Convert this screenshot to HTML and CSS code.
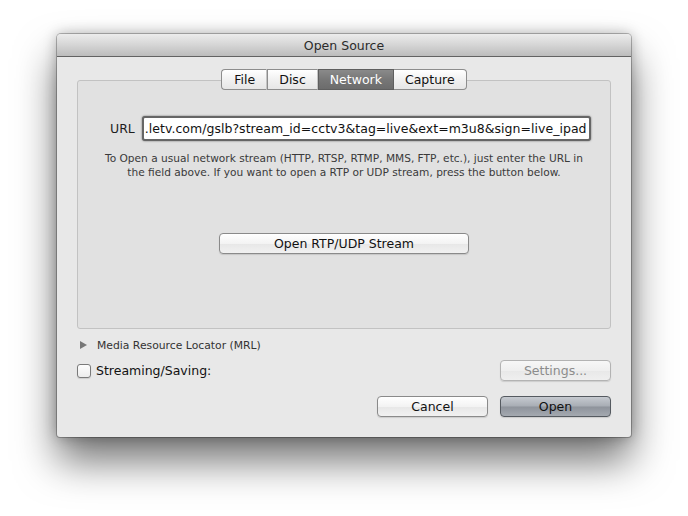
FILE: index.html
```html
<!DOCTYPE html>
<html>
<head>
<meta charset="utf-8">
<link rel="stylesheet" href="styles.css">
</head>
<body>
<div class="window">
  <div class="titlebar">Open Source</div>
  <div class="content">
    <div class="tabs">
      <div class="tab">File</div>
      <div class="tab">Disc</div>
      <div class="tab selected">Network</div>
      <div class="tab last">Capture</div>
    </div>
    <div class="group">
      <div class="url-row">
        <span class="url-label">URL</span>
        <div class="field">.letv.com/gslb?stream_id=cctv3&amp;tag=live&amp;ext=m3u8&amp;sign=live_ipad</div>
      </div>
      <p class="help">To Open a usual network stream (HTTP, RTSP, RTMP, MMS, FTP, etc.), just enter the URL in<br>the field above. If you want to open a RTP or UDP stream, press the button below.</p>
      <div class="center">
        <div class="btn rtp">Open RTP/UDP Stream</div>
      </div>
    </div>
    <div class="mrl-row">
      <span class="disclosure"></span>
      <span>Media Resource Locator (MRL)</span>
    </div>
    <div class="stream-row">
      <label class="check"><span class="box"></span>Streaming/Saving:</label>
      <div class="btn disabled small">Settings...</div>
    </div>
    <div class="actions">
      <div class="btn small">Cancel</div>
      <div class="btn small default">Open</div>
    </div>
  </div>
</div>
</body>
</html>
```

FILE: styles.css
```css
* { box-sizing: border-box; }
html, body { margin: 0; padding: 0; background: #fff; }
body {
  width: 688px;
  height: 516px;
  overflow: hidden;
  font-family: "DejaVu Sans", "Liberation Sans", sans-serif;
  color: #1e1e1e;
  padding-top: 34px;
  padding-left: 57px;
}
.window {
  width: 574px;
  height: 403px;
  background: #e8e8e8;
  border-radius: 4px 4px 3px 3px;
  box-shadow: 0 24px 40px rgba(0,0,0,0.55), 0 0 14px rgba(0,0,0,0.28), 0 0 0 1px rgba(0,0,0,0.25);
  overflow: hidden;
}
.titlebar {
  height: 23px;
  line-height: 24px;
  text-align: center;
  font-size: 12.5px;
  color: #2b2b2b;
  background: linear-gradient(#ececec, #d5d5d5 50%, #bcbcbc);
  border-bottom: 1px solid #626262;
}
.content {
  padding: 12px 20px 0 20px;
}
.tabs {
  display: flex;
  justify-content: center;
  position: relative;
  z-index: 1;
  height: 21px;
  margin-bottom: -10px;
}
.tab {
  height: 21px;
  line-height: 19px;
  font-size: 12.5px;
  padding: 0 11px;
  background: linear-gradient(#ffffff, #f1f1f1 50%, #e6e6e6);
  border: 1px solid #8d8d8d;
  border-right: 1px solid #c4c4c4;
  color: #111;
}
.tab:first-child { border-radius: 4px 0 0 4px; padding-left: 12px; }
.tab.last { border-radius: 0 4px 4px 0; border-right: 1px solid #8d8d8d; border-left: none; }
.tab.selected {
  background: linear-gradient(#8a8a8a, #777 50%, #6c6c6c);
  color: #fff;
  border-color: #5f5f5f;
  border-right: 1px solid #5f5f5f;
}
.group {
  width: 534px;
  height: 249px;
  border: 1px solid #c2c2c2;
  border-radius: 3px;
  background: #e1e1e1;
  padding-top: 35px;
}
.url-row {
  display: flex;
  align-items: center;
  padding-left: 32px;
  gap: 7px;
}
.url-label { font-size: 12.5px; }
.field {
  width: 449px;
  height: 25px;
  background: #fff;
  border: 2px solid #666;
  border-radius: 3px;
  box-shadow: 0 0 2px rgba(0,0,0,0.55);
  font-size: 12.5px;
  line-height: 21px;
  padding-left: 1px;
  white-space: nowrap;
  overflow: hidden;
  letter-spacing: 0.03px;
  color: #111;
}
.help {
  margin: 10px 0 0 0;
  text-align: center;
  font-size: 10.6px;
  line-height: 14px;
  color: #3a3a3a;
}
.center {
  display: flex;
  justify-content: center;
  margin-top: 54px;
}
.btn {
  height: 21px;
  line-height: 19px;
  text-align: center;
  font-size: 12.5px;
  border: 1px solid #8a8a8a;
  border-radius: 4px;
  background: linear-gradient(#ffffff, #f3f3f3 50%, #e7e7e7 52%, #f1f1f1);
  box-shadow: 0 1px 1px rgba(0,0,0,0.12);
  color: #111;
}
.btn.rtp { width: 250px; }
.btn.small { width: 111px; }
.btn.disabled {
  color: #8c8c8c;
  border-color: #b3b3b3;
  background: linear-gradient(#f7f7f7, #efefef 50%, #e8e8e8 52%, #efefef);
}
.btn.default {
  border-color: #555a60;
  background: linear-gradient(#c6cad0, #a8adb4 48%, #8e939b 52%, #a4a9b0);
  color: #111;
}
.mrl-row {
  display: flex;
  align-items: center;
  margin-top: 9px;
  height: 14px;
  font-size: 10.8px;
  color: #333;
  padding-left: 3px;
}
.disclosure {
  width: 0;
  height: 0;
  border-top: 4px solid transparent;
  border-bottom: 4px solid transparent;
  border-left: 7px solid #777;
  margin-right: 10px;
}
.stream-row {
  display: flex;
  justify-content: space-between;
  align-items: center;
  margin-top: 8px;
  width: 534px;
}
.check {
  display: flex;
  align-items: center;
  font-size: 12.5px;
  color: #111;
}
.box {
  width: 14px;
  height: 14px;
  border: 1px solid #7a7a7a;
  border-radius: 3px;
  background: linear-gradient(#fdfdfd, #ececec);
  margin-right: 5px;
  box-shadow: 0 1px 1px rgba(0,0,0,0.12);
}
.actions {
  display: flex;
  justify-content: flex-end;
  gap: 12px;
  margin-top: 15px;
  width: 534px;
}
```
